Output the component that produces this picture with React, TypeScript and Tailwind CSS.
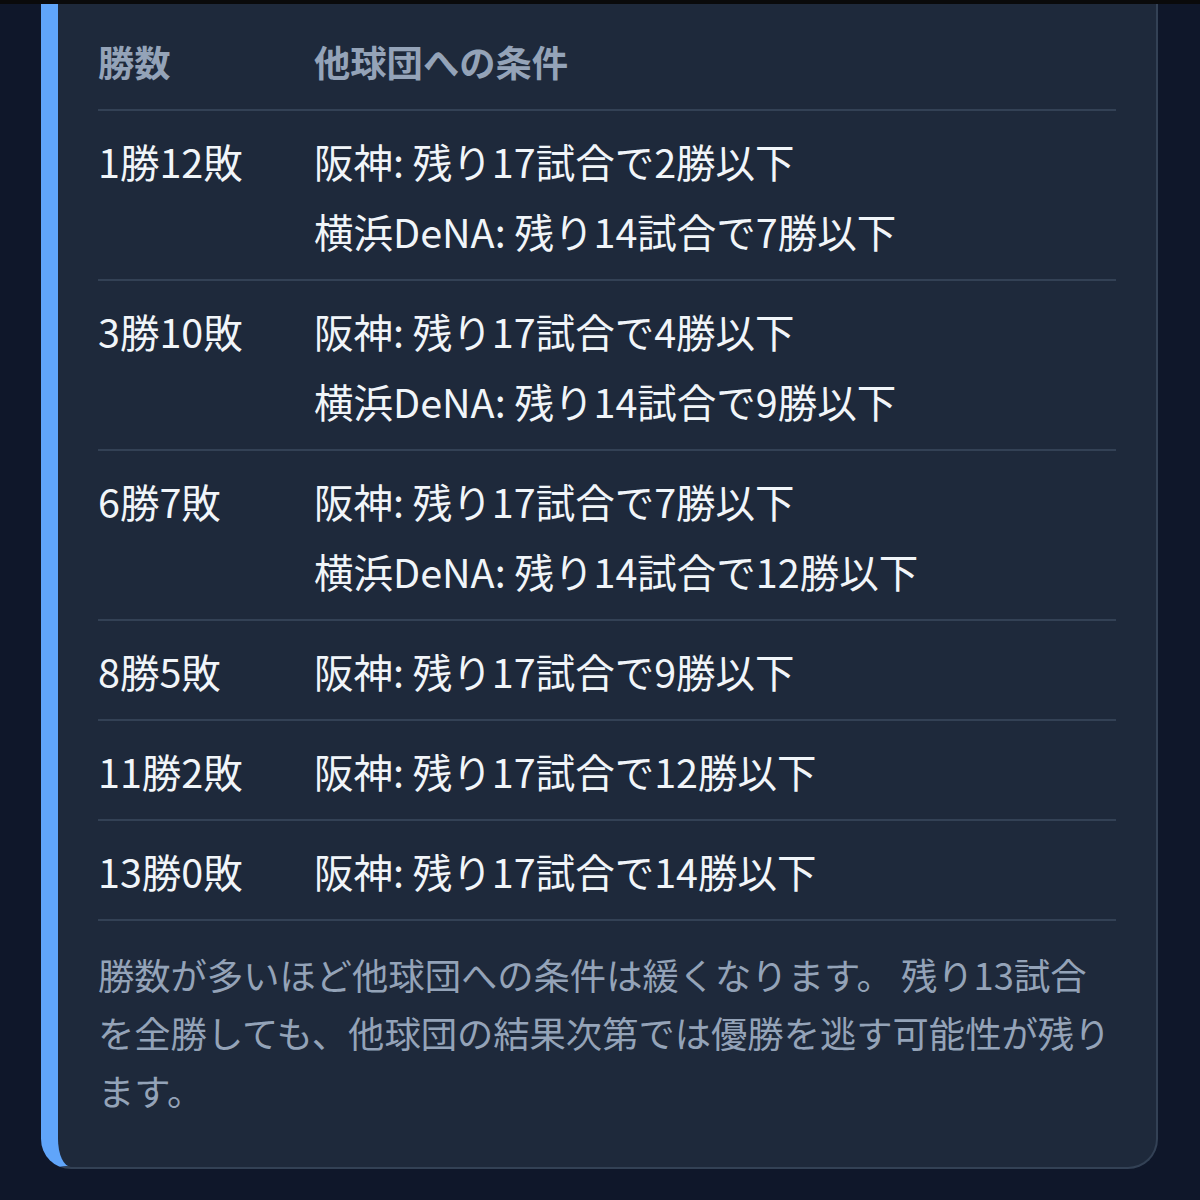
const rows: { record: string; conditions: string[] }[] = [
  {
    record: "1勝12敗",
    conditions: ["阪神: 残り17試合で2勝以下", "横浜DeNA: 残り14試合で7勝以下"],
  },
  {
    record: "3勝10敗",
    conditions: ["阪神: 残り17試合で4勝以下", "横浜DeNA: 残り14試合で9勝以下"],
  },
  {
    record: "6勝7敗",
    conditions: ["阪神: 残り17試合で7勝以下", "横浜DeNA: 残り14試合で12勝以下"],
  },
  { record: "8勝5敗", conditions: ["阪神: 残り17試合で9勝以下"] },
  { record: "11勝2敗", conditions: ["阪神: 残り17試合で12勝以下"] },
  { record: "13勝0敗", conditions: ["阪神: 残り17試合で14勝以下"] },
];

export default function App() {
  return (
    <div
      className="min-h-[1200px] bg-[#0f172a]"
      style={{ fontFamily: '"Noto Sans CJK JP", "Noto Sans", sans-serif' }}
    >
      <div className="h-[4px] bg-[#0a0a0b]" />
      <div className="ml-[41px] mr-[42px] rounded-b-[30px] border-2 border-t-0 border-l-[17px] border-[#334155] border-l-[#60a5fa] bg-[#1e293b] pl-[40px] pr-[40px] pt-[31px] pb-[48px]">
        <div className="grid grid-cols-[216px_1fr] border-b-2 border-[#334155] pb-[22px] text-[36.3px] font-semibold leading-[52px] text-[#94a3b8]">
          <div>勝数</div>
          <div>他球団への条件</div>
        </div>
        {rows.map((r) => (
          <div
            key={r.record}
            className="grid grid-cols-[216px_1fr] border-b-2 border-[#334155] pt-[24px] pb-[22px] text-[39.5px] leading-[52px] text-[#f1f5f9]"
          >
            <div>{r.record}</div>
            <div className="flex flex-col gap-[18px]">
              {r.conditions.map((c) => (
                <div key={c}>{c}</div>
              ))}
            </div>
          </div>
        ))}
        <p className="mt-[24px] -mr-[6px] text-[36.3px] leading-[58px] text-[#94a3b8]">
          勝数が多いほど他球団への条件は緩くなります。 残り13試合を全勝しても、他球団の結果次第では優勝を逃す可能性が残ります。
        </p>
      </div>
    </div>
  );
}
